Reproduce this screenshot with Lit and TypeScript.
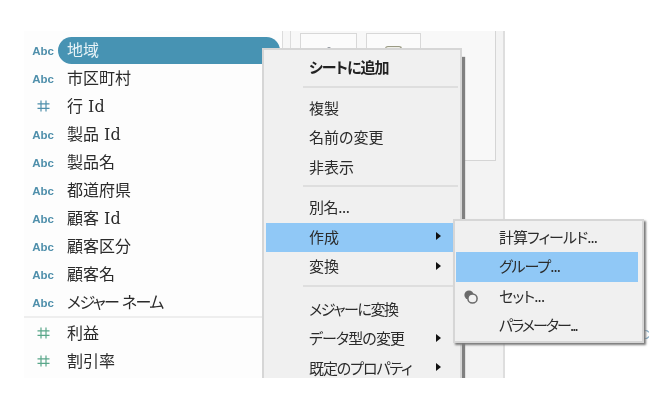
import { LitElement, html, css, nothing } from "lit";
import { customElement } from "lit/decorators.js";

type Field = { name: string; kind: "abc" | "hash" | "measure"; active?: boolean; ls?: number };
const dims: Field[] = [
  { name: "地域", kind: "abc", active: true },
  { name: "市区町村", kind: "abc" },
  { name: "行 Id", kind: "hash" },
  { name: "製品 Id", kind: "abc" },
  { name: "製品名", kind: "abc" },
  { name: "都道府県", kind: "abc" },
  { name: "顧客 Id", kind: "abc" },
  { name: "顧客区分", kind: "abc" },
  { name: "顧客名", kind: "abc" },
  { name: "メジャー ネーム", kind: "abc", ls: -1.6 },
];
const measures: Field[] = [
  { name: "利益", kind: "measure" },
  { name: "割引率", kind: "measure" },
];

type Item = { t?: string; bold?: boolean; sub?: boolean; on?: boolean; sep?: boolean; wide?: boolean; icon?: boolean; ls?: number };
const menu: Item[] = [
  { t: "シートに追加", bold: true, ls: -1 },
  { sep: true },
  { t: "複製" },
  { t: "名前の変更" },
  { t: "非表示" },
  { sep: true },
  { t: "別名...", ls: -0.4 },
  { t: "作成", sub: true, on: true },
  { t: "変換", sub: true },
  { sep: true, wide: true },
  { t: "メジャーに変換", ls: -1.4 },
  { t: "データ型の変更", sub: true, ls: -0.9 },
  { t: "既定のプロパティ", sub: true, ls: -1.1 },
];
const submenu: Item[] = [
  { t: "計算フィールド...", ls: -0.9 },
  { t: "グループ...", on: true, ls: -1 },
  { t: "セット...", icon: true, ls: -0.8 },
  { t: "パラメーター...", ls: -1.9 },
];

@customElement("app-root")
export class AppRoot extends LitElement {
  static styles = css`
    :host {
      display: block;
      width: 666px;
      height: 417px;
      background: #fff;
      overflow: hidden;
      filter: blur(0.45px);
    }
    .stage {
      position: relative;
      box-sizing: border-box;
      width: 666px;
      height: 417px;
      padding: 31px 0 39px 24px;
      display: flex;
      font-family: "DejaVu Serif", "Noto Sans CJK JP", sans-serif;
      font-feature-settings: "palt";
      color: #2b2b2b;
    }
    .list {
      width: 258px;
      padding-top: 5px;
      box-sizing: border-box;
      background: #fdfdfd;
    }
    .row {
      height: 28px;
      display: flex;
      align-items: center;
      font-size: 16px;
    }
    .glyph {
      box-sizing: border-box;
      width: 34px;
      padding-left: 4px;
      flex: none;
      display: flex;
      justify-content: center;
      font: bold 11.5px "Liberation Sans", sans-serif;
      color: #4f8fab;
    }
    .glyph.text { padding-top: 1px; }
    .glyph.measure { color: #5aa78a; }
    .glyph svg { display: block; }
    .name {
      box-sizing: border-box;
      flex: 1;
      height: 100%;
      display: flex;
      align-items: center;
      padding: 0 0 2px 9px;
      white-space: pre;
    }
    .active .name {
      background: #4793b3;
      color: #e8f3f7;
      border-radius: 14px;
      height: 27px;
      margin-right: 2px;
      position: relative;
    }
    .rule {
      height: 2px;
      background: #eeeeee;
      margin: 0 0 1px;
    }
    .strip {
      width: 8px;
      box-sizing: border-box;
      border-left: 1px solid #dcdcdc;
      background: #f7f7f7;
    }
    .pane {
      width: 215px;
      box-sizing: border-box;
      border-left: 1px solid #dcdcdc;
      border-right: 2px solid #dedede;
      background: #f3f3f3;
    }
    .sheet {
      width: 205px;
      height: 130px;
      box-sizing: border-box;
      border-right: 1px solid #d5d5d5;
      border-bottom: 1px solid #d5d5d5;
      background: #f8f8f8;
      padding: 2px 0 0 9px;
      display: flex;
      gap: 9px;
      align-items: flex-start;
    }
    .tab {
      height: 40px;
      box-sizing: border-box;
      background: #fbfbfb;
      border: 1px solid #d8d8d8;
      display: flex;
      justify-content: center;
    }
    .tab.a { width: 57px; }
    .tab.b { width: 55px; }
    .mark-a { width: 4px; height: 2px; margin-top: 13px; background: #8b9099; border-radius: 2px 2px 0 0; }
    .mark-b { width: 17px; height: 4px; margin-top: 12px; border: 1px solid #9a9a84; border-bottom: 0; border-radius: 3px 3px 0 0; box-sizing: border-box; background: #eeeee6; }
    .peek {
      position: absolute;
      left: 641px;
      top: 328px;
      font: 12px "Liberation Sans", sans-serif;
      color: #7fa9c4;
    }
    .menu {
      position: absolute;
      box-sizing: border-box;
      background: #f0f0f0;
      border: 2px solid #d6d6d6;
      font-family: "Noto Sans CJK JP", sans-serif;
      font-size: 15px;
    }
    .main {
      left: 262px;
      top: 48px;
      width: 200px;
      height: 330px;
      padding: 3px 2px 0 2px;
      border-bottom: 0;
      box-shadow: 3px 9px 1px 0 #808080;
      clip-path: inset(0 -4px 0 0);
    }
    .sub {
      left: 453px;
      top: 219px;
      width: 191px;
      height: 124px;
      padding: 1.5px 4px 0 1px;
      box-shadow: 2px 2px 2px 0 #7a7a7a;
    }
    .item {
      height: 29.5px;
      display: flex;
      align-items: center;
      justify-content: space-between;
      box-sizing: border-box;
      white-space: nowrap;
    }
    .main .item { padding: 0 17px 2px 43px; }
    .sub .item { padding: 0 0 2px 43px; position: relative; }
    .item.on { background: #90c8f6; }
    .item.bold { font-weight: 700; color: #222; }
    .sep {
      box-sizing: border-box;
      height: 11px;
      padding: 3px 0 0 37px;
    }
    .sep.wide { height: 13px; }
    .sep i {
      display: block;
      height: 2px;
      background: #dedede;
    }
    .arrow {
      width: 0;
      height: 0;
      border-left: 5px solid #111;
      border-top: 4.5px solid transparent;
      border-bottom: 4.5px solid transparent;
    }
    .set {
      position: absolute;
      left: 7px;
      top: 7px;
    }
  `;

  private hash() {
    return html`<svg width="13" height="12" viewBox="0 0 13 12" fill="none" stroke="currentColor" stroke-width="1.2">
      <path d="M4 0.5V11.5M9 0.5V11.5M0.5 3.8H12.5M0.5 8.4H12.5" />
    </svg>`;
  }

  private field(f: Field) {
    const ls = f.ls ? `letter-spacing:${f.ls}px` : "";
    return html`<div class="row ${f.active ? "active" : ""}">
      <span class="glyph ${f.kind === "measure" ? "measure" : ""} ${f.kind === "abc" ? "text" : ""}">${f.kind === "abc" ? "Abc" : this.hash()}</span>
      <span class="name" style=${ls}>${f.name}</span>
    </div>`;
  }

  private item(i: Item) {
    if (i.sep) return html`<div class="sep ${i.wide ? "wide" : ""}"><i></i></div>`;
    const ls = i.ls ? `letter-spacing:${i.ls}px` : "";
    return html`<div class="item ${i.on ? "on" : ""} ${i.bold ? "bold" : ""}">
      ${i.icon
        ? html`<svg class="set" width="16" height="16" viewBox="0 0 16 16">
            <circle cx="6" cy="6" r="4.6" fill="#6a6a6a" />
            <circle cx="9.5" cy="9.5" r="4.6" fill="#f2f2f2" stroke="#6a6a6a" stroke-width="1.5" />
          </svg>`
        : nothing}
      <span style=${ls}>${i.t}</span>
      ${i.sub ? html`<span class="arrow"></span>` : nothing}
    </div>`;
  }

  render() {
    return html`<div class="stage">
      <div class="list">
        ${dims.map((f) => this.field(f))}
        <div class="rule"></div>
        ${measures.map((f) => this.field(f))}
      </div>
      <div class="strip"></div>
      <div class="pane">
        <div class="sheet">
          <div class="tab a"><span class="mark-a"></span></div>
          <div class="tab b"><span class="mark-b"></span></div>
        </div>
      </div>
      <span class="peek">C</span>
      <div class="menu main">${menu.map((i) => this.item(i))}</div>
      <div class="menu sub">${submenu.map((i) => this.item(i))}</div>
    </div>`;
  }
}
